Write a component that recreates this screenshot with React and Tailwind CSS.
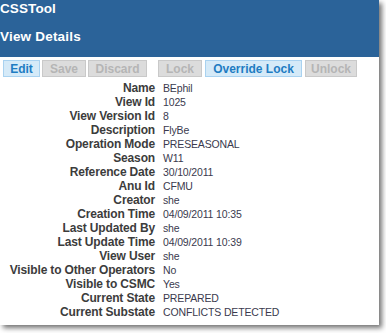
import React from "react";

const rows = [
  ["Name", "BEphil"],
  ["View Id", "1025"],
  ["View Version Id", "8"],
  ["Description", "FlyBe"],
  ["Operation Mode", "PRESEASONAL"],
  ["Season", "W11"],
  ["Reference Date", "30/10/2011"],
  ["Anu Id", "CFMU"],
  ["Creator", "she"],
  ["Creation Time", "04/09/2011 10:35"],
  ["Last Updated By", "she"],
  ["Last Update Time", "04/09/2011 10:39"],
  ["View User", "she"],
  ["Visible to Other Operators", "No"],
  ["Visible to CSMC", "Yes"],
  ["Current State", "PREPARED"],
  ["Current Substate", "CONFLICTS DETECTED"],
];

function Btn({ label, active, w }) {
  return (
    <button
      className={`h-[17px] border text-[12px] font-bold leading-none ${w} ${
        active
          ? "bg-[#d5eaf8] border-[#a9d2f0] text-[#1e7cc2]"
          : "bg-[#dcdcdc] border-[#c9c9c9] text-[#b5b5b5]"
      }`}
    >
      {label}
    </button>
  );
}

export default function App() {
  return (
    <div className="w-[386px] h-[333px] bg-white font-['Liberation_Sans',Arial,sans-serif]">
      <div className="w-[379px] h-[325px] bg-white shadow-[3px_3px_5px_rgba(0,0,0,0.55)]">
        <header className="h-[57px] bg-[#2b6399] text-white font-bold text-[13.5px]">
          <div className="pt-[1px] leading-[16px] tracking-[0.1px]">CSSTool</div>
          <div className="pt-[12px] leading-[16px] tracking-[0.2px]">View Details</div>
        </header>

        <div className="flex items-center pt-[3px] pl-[3px]">
          <div className="flex gap-[2px]">
            <Btn label="Edit" active w="w-[37px]" />
            <Btn label="Save" w="w-[44px]" />
            <Btn label="Discard" w="w-[59px]" />
          </div>
          <div className="flex gap-[3px] ml-[11px]">
            <Btn label="Lock" w="w-[44px]" />
            <Btn label="Override Lock" active w="w-[97px]" />
            <Btn label="Unlock" w="w-[52px]" />
          </div>
        </div>

        <div className="mt-[4px] grid grid-cols-[155px_1fr] leading-[14px] gap-x-[8px]">
          {rows.map(([k, v]) => (
            <React.Fragment key={k}>
              <div className="text-right font-bold text-[12px] tracking-[-0.15px] text-[#3c3c3c]">{k}</div>
              <div className="text-[10.5px] tracking-[-0.15px] text-[#3a3a4e]">{v}</div>
            </React.Fragment>
          ))}
        </div>
      </div>
    </div>
  );
}
